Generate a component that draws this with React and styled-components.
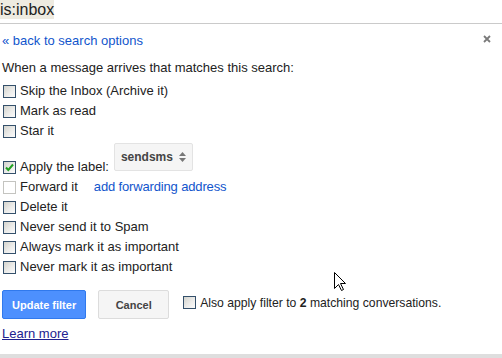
import React from 'react';
import styled, { createGlobalStyle } from 'styled-components';

const Global = createGlobalStyle`
  html, body { margin: 0; padding: 0; background: #dedede; }
  body {
    font-family: "Liberation Sans", Arial, sans-serif;
    font-size: 13px;
    color: #222;
  }
`;

const Panel = styled.div`
  position: relative;
  height: 354px;
  background: #fff;
  box-shadow: 0 1px 2px rgba(0, 0, 0, 0.12);
  overflow: hidden;
`;

const Header = styled.div`
  height: 23px;
  border-bottom: 1px solid #cacaca;
`;

const Query = styled.span`
  display: inline-block;
  font-size: 16px;
  line-height: 19px;
  background: #eeebe1;
  color: #222;
`;

const Body = styled.div`
  padding: 7px 11px 0 2px;
`;

const TopRow = styled.div`
  display: flex;
  justify-content: space-between;
  align-items: flex-start;
  height: 20px;
  line-height: 20px;
`;

const Link = styled.a`
  color: #15c;
  text-decoration: none;
  cursor: pointer;
  margin-left: ${(p) => p.$gap || 0}px;
  letter-spacing: ${(p) => (p.$tight ? '-0.15px' : 'normal')};
`;

const Close = styled.button`
  border: 0;
  background: none;
  padding: 0;
  margin-top: 4px;
  width: 8px;
  height: 8px;
  display: flex;
  cursor: pointer;
`;

const Intro = styled.div`
  margin-top: 7px;
  line-height: 20px;
`;

const Options = styled.div`
  margin-top: 3px;
  display: flex;
  flex-direction: column;
`;

const Row = styled.div`
  display: flex;
  align-items: flex-end;
  height: ${(p) => (p.$tall ? 36 : 20)}px;
`;

const Opt = styled.label`
  display: flex;
  align-items: center;
  height: 20px;
  line-height: 20px;
  color: #222;
  white-space: nowrap;
`;

const Box = styled.span`
  box-sizing: border-box;
  width: 13px;
  height: 13px;
  margin: 0 4px 0 1px;
  display: inline-flex;
  flex: none;
  border: 1px solid ${(p) => (p.$disabled ? '#c4c4c0' : '#34506b')};
  background: ${(p) =>
    p.$disabled ? '#fff' : 'linear-gradient(135deg, #d3d3cd 0%, #ececea 55%, #fbfbfb 100%)'};
`;

const Select = styled.div`
  box-sizing: border-box;
  width: 79px;
  height: 28px;
  margin: 0 0 6px 5px;
  padding: 0 6px;
  display: flex;
  align-items: center;
  justify-content: space-between;
  background: #f5f5f5;
  border: 1px solid #e3e3e3;
  border-radius: 2px;
  font-size: 12px;
  font-weight: bold;
  color: #444;
`;

const ButtonRow = styled.div`
  margin-top: 13px;
  display: flex;
  align-items: center;
  gap: 12px;
`;

const Button = styled.button`
  box-sizing: border-box;
  height: 29px;
  min-width: 71px;
  padding: 0 9px;
  border-radius: 2px;
  font-family: "Liberation Sans", Arial, sans-serif;
  font-size: 11px;
  font-weight: bold;
  cursor: pointer;
  border: 1px solid ${(p) => (p.$primary ? '#3079ed' : '#dcdcdc')};
  background: ${(p) => (p.$primary ? '#4d90fe' : '#f5f5f5')};
  color: ${(p) => (p.$primary ? '#fff' : '#444')};
`;

const AlsoLabel = styled(Opt)`
  margin: 0 0 4px 1px;
  font-size: 12.2px;
`;

const Learn = styled.a`
  display: block;
  margin-top: 5px;
  line-height: 20px;
  width: max-content;
  color: #21218f;
  text-decoration: underline;
  cursor: pointer;
`;

const Pointer = styled.svg`
  position: absolute;
  left: 334px;
  top: 272px;
  pointer-events: none;
`;

const Check = ({ checked, disabled }) => (
  <Box $disabled={disabled}>
    {checked && (
      <svg width="11" height="11" viewBox="0 0 11 11">
        <path d="M2 5.5 L4.3 8 L9 2.5" fill="none" stroke="#21a121" strokeWidth="2" />
      </svg>
    )}
  </Box>
);

const options = [
  'Skip the Inbox (Archive it)',
  'Mark as read',
  'Star it',
];

const lower = [
  'Delete it',
  'Never send it to Spam',
  'Always mark it as important',
  'Never mark it as important',
];

export default function App() {
  return (
    <>
      <Global />
      <Panel>
        <Header>
          <Query>is:inbox</Query>
        </Header>
        <Body>
          <TopRow>
            <Link>« back to search options</Link>
            <Close aria-label="Close">
              <svg width="8" height="8" viewBox="0 0 8 8">
                <path d="M1 1 L7 7 M7 1 L1 7" stroke="#7a7a7a" strokeWidth="1.8" />
              </svg>
            </Close>
          </TopRow>
          <Intro>When a message arrives that matches this search:</Intro>
          <Options>
            {options.map((t) => (
              <Row key={t}>
                <Opt>
                  <Check />
                  {t}
                </Opt>
              </Row>
            ))}
            <Row $tall>
              <Opt>
                <Check checked />
                Apply the label:
              </Opt>
              <Select>
                <span>sendsms</span>
                <svg width="7" height="12" viewBox="0 0 7 12">
                  <path d="M0 5 L3.5 1 L7 5 Z M0 7 L3.5 11 L7 7 Z" fill="#777" />
                </svg>
              </Select>
            </Row>
            <Row>
              <Opt>
                <Check disabled />
                Forward it
              </Opt>
              <Opt>
                <Link $gap={16} $tight>add forwarding address</Link>
              </Opt>
            </Row>
            {lower.map((t) => (
              <Row key={t}>
                <Opt>
                  <Check />
                  {t}
                </Opt>
              </Row>
            ))}
          </Options>
          <ButtonRow>
            <Button $primary>Update filter</Button>
            <Button>Cancel</Button>
            <AlsoLabel>
              <Check />
              Also apply filter to&nbsp;<b>2</b>&nbsp;matching conversations.
            </AlsoLabel>
          </ButtonRow>
          <Learn>Learn more</Learn>
        </Body>
        <Pointer width="13" height="20" viewBox="0 0 13 20">
          <path
            d="M0.5 0.5 L0.5 16.5 L4.5 12.5 L7.5 18.5 L9.5 17.5 L6.5 11.5 L11.5 11.5 Z"
            fill="#fff"
            stroke="#000"
            strokeWidth="1"
            strokeLinejoin="miter"
          />
        </Pointer>
      </Panel>
    </>
  );
}
